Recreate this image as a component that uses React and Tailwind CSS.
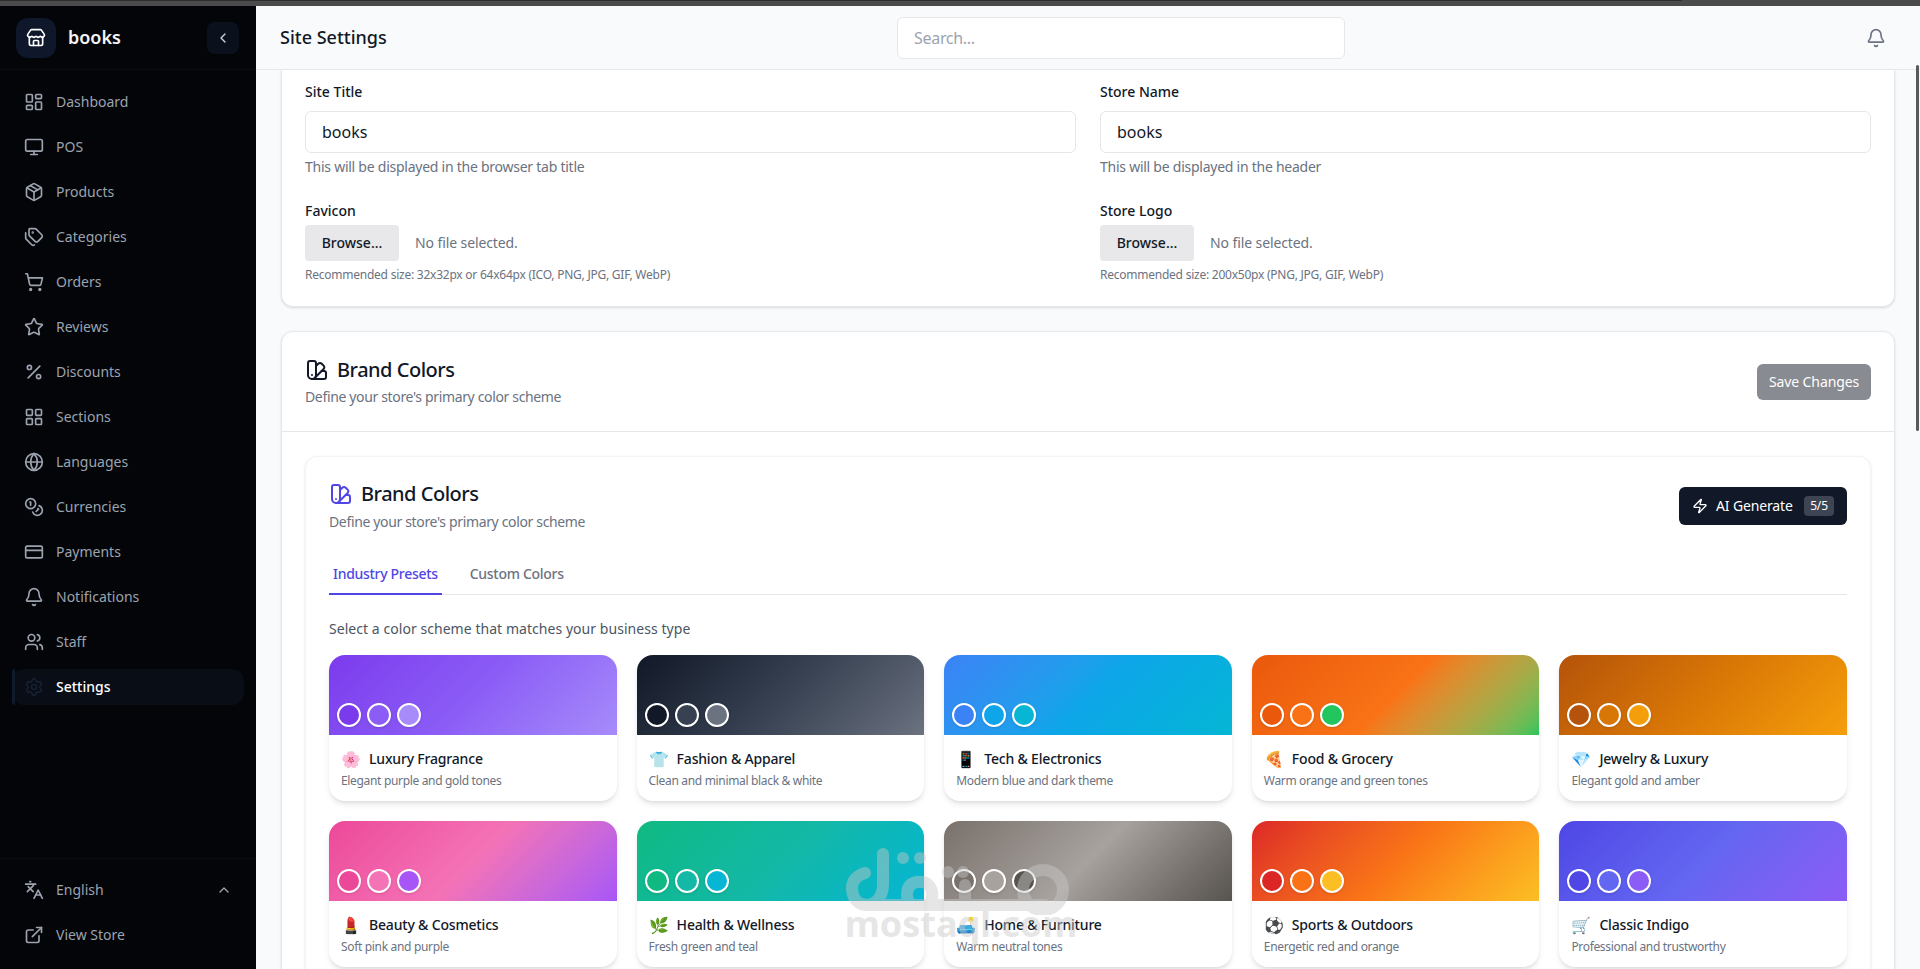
import {
  Store, ChevronLeft, ChevronUp, LayoutDashboard, Monitor, Package, Tags, ShoppingCart, Star, Percent,
  LayoutGrid, Globe, Coins, CreditCard, Bell, Users, Settings, Languages, ExternalLink, SwatchBook, Zap,
} from 'lucide-react';

const navItems = [
  { name: 'Dashboard', icon: LayoutDashboard },
  { name: 'POS', icon: Monitor },
  { name: 'Products', icon: Package },
  { name: 'Categories', icon: Tags },
  { name: 'Orders', icon: ShoppingCart },
  { name: 'Reviews', icon: Star },
  { name: 'Discounts', icon: Percent },
  { name: 'Sections', icon: LayoutGrid },
  { name: 'Languages', icon: Globe },
  { name: 'Currencies', icon: Coins },
  { name: 'Payments', icon: CreditCard },
  { name: 'Notifications', icon: Bell },
  { name: 'Staff', icon: Users },
  { name: 'Settings', icon: Settings, active: true },
];

const presets = [
  { emoji: '🌸', name: 'Luxury Fragrance', desc: 'Elegant purple and gold tones', gradient: 'from-[#7c3aed] via-[#8b5cf6] to-[#a78bfa]', dots: ['bg-[#7c3aed]', 'bg-[#8b5cf6]', 'bg-[#a78bfa]'] },
  { emoji: '👕', name: 'Fashion & Apparel', desc: 'Clean and minimal black & white', gradient: 'from-[#111827] via-[#374151] to-[#6b7280]', dots: ['bg-[#111827]', 'bg-[#374151]', 'bg-[#6b7280]'] },
  { emoji: '📱', name: 'Tech & Electronics', desc: 'Modern blue and dark theme', gradient: 'from-[#3b82f6] via-[#0ea5e9] to-[#06b6d4]', dots: ['bg-[#3b82f6]', 'bg-[#0ea5e9]', 'bg-[#06b6d4]'] },
  { emoji: '🍕', name: 'Food & Grocery', desc: 'Warm orange and green tones', gradient: 'from-[#ea580c] via-[#f97316] to-[#22c55e]', dots: ['bg-[#ea580c]', 'bg-[#f97316]', 'bg-[#22c55e]'] },
  { emoji: '💎', name: 'Jewelry & Luxury', desc: 'Elegant gold and amber', gradient: 'from-[#b45309] via-[#d97706] to-[#f59e0b]', dots: ['bg-[#b45309]', 'bg-[#d97706]', 'bg-[#f59e0b]'] },
  { emoji: '💄', name: 'Beauty & Cosmetics', desc: 'Soft pink and purple', gradient: 'from-[#ec4899] via-[#f472b6] to-[#a855f7]', dots: ['bg-[#ec4899]', 'bg-[#f472b6]', 'bg-[#a855f7]'] },
  { emoji: '🌿', name: 'Health & Wellness', desc: 'Fresh green and teal', gradient: 'from-[#10b981] via-[#14b8a6] to-[#06b6d4]', dots: ['bg-[#10b981]', 'bg-[#14b8a6]', 'bg-[#06b6d4]'] },
  { emoji: '🛋️', name: 'Home & Furniture', desc: 'Warm neutral tones', gradient: 'from-[#78716c] via-[#a8a29e] to-[#57534e]', dots: ['bg-[#78716c]', 'bg-[#a8a29e]', 'bg-[#57534e]'] },
  { emoji: '⚽', name: 'Sports & Outdoors', desc: 'Energetic red and orange', gradient: 'from-[#dc2626] via-[#f97316] to-[#fbbf24]', dots: ['bg-[#dc2626]', 'bg-[#f97316]', 'bg-[#fbbf24]'] },
  { emoji: '🛒', name: 'Classic Indigo', desc: 'Professional and trustworthy', gradient: 'from-[#4f46e5] via-[#6366f1] to-[#8b5cf6]', dots: ['bg-[#4f46e5]', 'bg-[#6366f1]', 'bg-[#8b5cf6]'] },
];

const Sidebar = () => (
  <aside className="w-64 shrink-0 bg-[#030509] flex flex-col">
    <div className="h-16 shrink-0 flex items-center justify-between pl-4 pr-[17px] border-b border-[#0a0d13]">
      <div className="flex items-center gap-3">
        <div className="w-10 h-10 rounded-xl bg-[#0f172a] flex items-center justify-center text-white">
          <Store className="w-5 h-5" />
        </div>
        <span className="text-lg font-semibold text-[#f3f4f6] pb-[2px]">books</span>
      </div>
      <button className="w-8 h-8 rounded-lg bg-[#0b111c] flex items-center justify-center text-[#d1d5db]">
        <ChevronLeft className="w-4 h-4" />
      </button>
    </div>
    <nav className="flex-1 px-3 pt-[14px] flex flex-col gap-[9px]">
      {navItems.map((item) => (
        <a
          key={item.name}
          className={`relative h-9 flex items-center gap-3 pl-3 rounded-xl text-sm ${item.active ? 'bg-[#080d16] text-white font-medium' : 'text-[#9ca3af]'}`}
        >
          {item.active && <span className="absolute left-0 top-0 bottom-0 w-[3px] bg-[#0f1a2b] rounded-l" />}
          <item.icon className={`w-5 h-5 ${item.active ? 'text-[#172033]' : 'text-[#9ca3af]'}`} />
          {item.name}
        </a>
      ))}
    </nav>
    <div className="border-t border-[#0a0d13] px-3 pt-[13px] pb-4 flex flex-col gap-[9px]">
      <div className="h-9 flex items-center gap-3 pl-3 pr-[12px] text-sm text-[#9ca3af]">
        <Languages className="w-5 h-5" />
        <span className="flex-1">English</span>
        <ChevronUp className="w-4 h-4" />
      </div>
      <div className="h-9 flex items-center gap-3 pl-3 text-sm text-[#9ca3af]">
        <ExternalLink className="w-5 h-5" />
        View Store
      </div>
    </div>
  </aside>
);

const Field = ({ label, hint }) => (
  <div>
    <label className="block text-sm font-medium text-[#111827] leading-5 mb-[9px]">{label}</label>
    <div className="h-[42px] border border-[#e5e7eb] rounded-md bg-white flex items-center px-4 text-base text-[#111827]">books</div>
    <p className="mt-[4px] text-sm leading-5 tracking-[-0.25px] text-[#6b7280]">{hint}</p>
  </div>
);

const FileField = ({ label, hint }) => (
  <div>
    <label className="block text-sm font-medium text-[#111827] leading-5 mb-[4px]">{label}</label>
    <div className="flex items-center gap-4">
      <div className="w-[94px] h-9 rounded bg-[#e8e8ea] flex items-center justify-center text-sm font-medium text-[#111827]">Browse...</div>
      <span className="text-sm tracking-[-0.1px] text-[#6b7280]">No file selected.</span>
    </div>
    <p className="mt-[4px] text-xs leading-5 tracking-[-0.24px] text-[#6b7280]">{hint}</p>
  </div>
);

const PresetCard = ({ preset }) => (
  <div className="rounded-2xl overflow-hidden bg-white shadow-md">
    <div className={`relative h-20 bg-linear-135 ${preset.gradient}`}>
      <div className="absolute left-2 bottom-2 flex gap-[6px]">
        {preset.dots.map((dot) => (
          <span key={dot} className={`w-6 h-6 rounded-full border-2 border-white shadow ${dot}`} />
        ))}
      </div>
    </div>
    <div className="h-[66px] px-3 pt-[13px]">
      <div className="flex items-center gap-2 h-[22px]">
        <span className="w-5 text-base leading-none text-center">{preset.emoji}</span>
        <span className="text-sm font-medium tracking-[-0.18px] text-[#111827]">{preset.name}</span>
      </div>
      <p className="mt-[3px] text-xs leading-4 tracking-[-0.33px] text-[#6b7280]">{preset.desc}</p>
    </div>
  </div>
);

const App = () => (
  <div className="relative h-screen overflow-hidden flex flex-col bg-[#f9fafb] font-['Noto_Sans',sans-serif]">
    <div className="h-[6px] shrink-0 bg-[#4b4b4b]">
      <div className="h-px w-[1682px] bg-[#2e2e2e]" />
    </div>
    <div className="flex-1 flex min-h-0">
      <Sidebar />
      <main className="flex-1 min-w-0 flex flex-col">
        <header className="h-16 shrink-0 border-b border-[#e5e7eb] grid grid-cols-[617px_448px_1fr] items-center pl-6 pr-[34px] bg-[#f9fafb]">
          <h1 className="text-lg font-medium text-[#111827] pb-[2px]">Site Settings</h1>
          <div className="h-[42px] rounded-md border border-[#e5e7eb] bg-white flex items-center px-4 text-base tracking-[-0.3px] text-[#9ca3af]">Search...</div>
          <div className="flex justify-end">
            <Bell className="w-5 h-5 text-[#6b7280]" />
          </div>
        </header>
        <div className="flex-1 min-h-0 overflow-hidden px-[25px]">
          <section className="bg-white border border-t-0 border-[#e5e7eb] rounded-b-xl shadow-sm px-[23px] pt-[12px] pb-[21px]">
            <div className="grid grid-cols-2 gap-x-6 gap-y-[24px]">
              <Field label="Site Title" hint="This will be displayed in the browser tab title" />
              <Field label="Store Name" hint="This will be displayed in the header" />
              <FileField label="Favicon" hint="Recommended size: 32x32px or 64x64px (ICO, PNG, JPG, GIF, WebP)" />
              <FileField label="Store Logo" hint="Recommended size: 200x50px (PNG, JPG, GIF, WebP)" />
            </div>
          </section>
          <section className="mt-6 bg-white border border-[#e5e7eb] rounded-xl shadow-sm">
            <div className="h-[100px] border-b border-[#e5e7eb] px-[23px] flex items-center justify-between">
              <div>
                <div className="flex items-center gap-2">
                  <SwatchBook className="w-6 h-6 text-[#111827]" />
                  <h2 className="text-xl font-medium tracking-[-0.5px] text-[#111827]">Brand Colors</h2>
                </div>
                <p className="mt-[3px] text-sm tracking-[-0.35px] text-[#6b7280]">Define your store's primary color scheme</p>
              </div>
              <button className="w-[114px] h-9 rounded-md bg-[#888b91] text-sm tracking-[-0.1px] text-white">Save Changes</button>
            </div>
            <div className="px-[23px] pt-6">
              <div className="rounded-xl bg-white border border-[#f3f4f6] shadow-sm px-[23px] pt-[23px] pb-6">
                <div className="flex items-start justify-between">
                  <div>
                    <div className="flex items-center gap-2">
                      <SwatchBook className="w-6 h-6 text-[#4f46e5]" />
                      <h3 className="text-xl font-medium tracking-[-0.5px] text-[#111827]">Brand Colors</h3>
                    </div>
                    <p className="mt-[4px] text-sm tracking-[-0.35px] text-[#6b7280]">Define your store's primary color scheme</p>
                  </div>
                  <button className="mt-[7px] h-[38px] w-[168px] rounded-md bg-[#111827] flex items-center gap-2 pl-[13px] pr-[13px] text-sm tracking-[-0.15px] text-white">
                    <Zap className="w-4 h-4" />
                    AI Generate
                    <span className="ml-auto w-[30px] h-5 rounded bg-[#3d4452] text-xs flex items-center justify-center">5/5</span>
                  </button>
                </div>
                <div className="mt-6 flex border-b border-[#e5e7eb] h-[39px]">
                  <div className="h-[39px] px-1 pt-[8px] border-b-2 border-[#4f46e5] text-sm font-medium tracking-[-0.3px] text-[#4f46e5]">Industry Presets</div>
                  <div className="ml-6 h-[39px] px-1 pt-[8px] text-sm font-medium tracking-[-0.3px] text-[#6b7280]">Custom Colors</div>
                </div>
                <p className="mt-6 text-sm leading-5 tracking-[0.05px] text-[#4b5563]">Select a color scheme that matches your business type</p>
                <div className="mt-4 grid grid-cols-5 gap-5">
                  {presets.map((preset) => (
                    <PresetCard key={preset.name} preset={preset} />
                  ))}
                </div>
              </div>
            </div>
          </section>
        </div>
      </main>
    </div>
    {/* scrollbar thumb */}
    <div className="absolute right-[1px] top-[65px] w-[3px] h-[366px] bg-[#5a5a5a] rounded" />
    {/* watermark */}
    <div className="absolute left-[845px] top-[840px] w-[232px] flex flex-col items-center pointer-events-none opacity-45">
      <svg width="232" height="75" viewBox="0 0 232 75" fill="none" stroke="#c8c8c8" strokeWidth="12" strokeLinecap="round" strokeLinejoin="round">
        <path d="M38 14V44C38 58 30 65 22 65C12 65 7 57 7 48C7 40 13 35 20 33" />
        <path d="M22 65H200" />
        <circle cx="198" cy="50" r="20" />
        <path d="M66 65C60 58 60 44 72 42C84 40 90 50 86 62" />
        <path d="M120 45V60" />
        <circle cx="58" cy="18" r="6" fill="#c8c8c8" stroke="none" />
        <circle cx="75" cy="18" r="6" fill="#c8c8c8" stroke="none" />
        <circle cx="103" cy="32" r="6" fill="#c8c8c8" stroke="none" />
        <circle cx="118" cy="32" r="6" fill="#c8c8c8" stroke="none" />
      </svg>
      <span className="mt-[-11px] text-[36px] leading-[40px] font-bold text-[#c8c8c8]">mostaql.com</span>
    </div>
  </div>
);

export default App;
